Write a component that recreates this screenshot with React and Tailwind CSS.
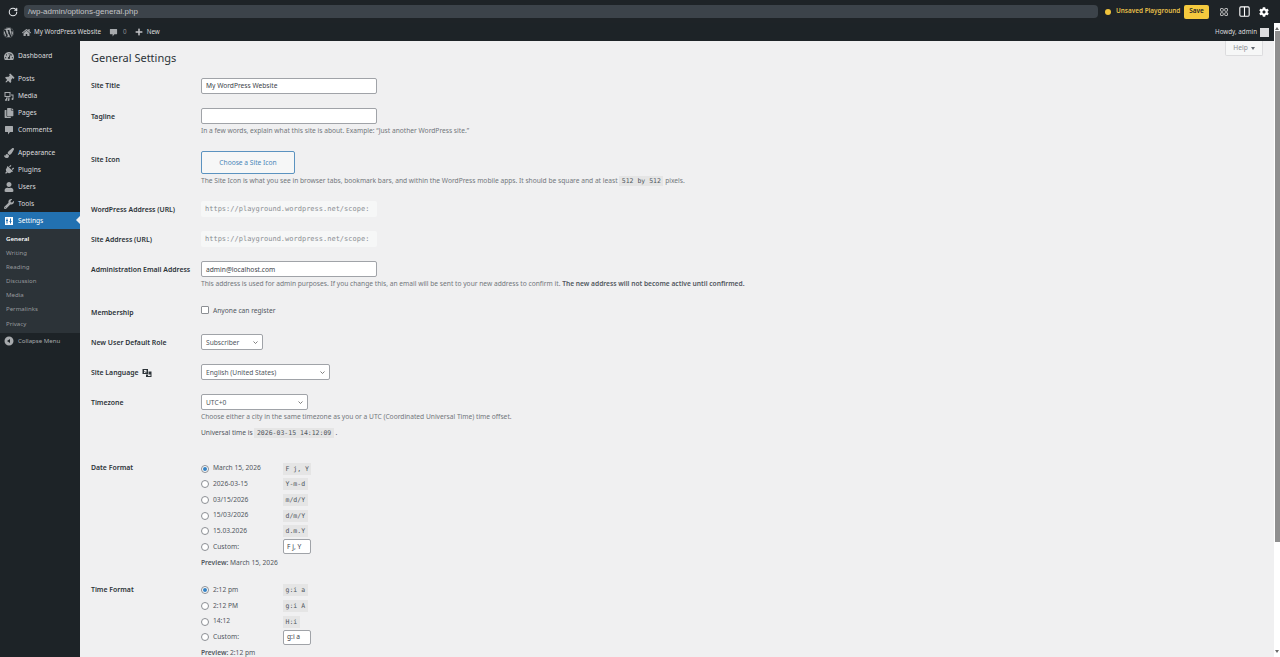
import React from 'react';
import {
  FaWordpress, FaHome, FaPlus, FaTachometerAlt, FaThumbtack, FaCopy,
  FaPaintBrush, FaPlug, FaUser, FaWrench, FaCog,
} from 'react-icons/fa';
import { LuRotateCw } from 'react-icons/lu';

const font = 'font-["Noto_Sans","Open_Sans",sans-serif]';

function BubbleIcon({ className = 'w-[10px] h-[10px]' }) {
  return (
    <svg viewBox="0 0 20 20" className={className} fill="currentColor">
      <path d="M3 2h14a1 1 0 0 1 1 1v10a1 1 0 0 1-1 1h-5l-4 5v-5H3a1 1 0 0 1-1-1V3a1 1 0 0 1 1-1z" />
    </svg>
  );
}

function MediaIcon() {
  return (
    <svg viewBox="0 0 20 20" className="w-[10px] h-[10px]" fill="currentColor">
      <path d="M1 2h12v10H1zm2 2v6h8V4z" fillRule="evenodd" />
      <path d="M14 7h5v9a2 2 0 1 1-2-2V9h-3zM4 13h7v5a2 2 0 1 1-2-2v-1H6v3a2 2 0 1 1-2-2z" />
    </svg>
  );
}

function SettingsIcon() {
  return (
    <svg viewBox="0 0 20 20" className="w-[10px] h-[10px]" fill="currentColor">
      <path d="M2 2h16v16H2zm3 3v3H4v2h1v5h2v-5h1V8H7V5zm7 0v5h-1v2h1v3h2v-3h1v-2h-1V5z" fillRule="evenodd" />
    </svg>
  );
}

function CollapseIcon() {
  return (
    <svg viewBox="0 0 20 20" className="w-[10px] h-[10px]" fill="currentColor">
      <path d="M10 1a9 9 0 1 1 0 18 9 9 0 0 1 0-18zm2 5-6 4 6 4z" fillRule="evenodd" />
    </svg>
  );
}

function TranslationIcon() {
  return (
    <svg viewBox="0 0 20 20" className="w-[10px] h-[10px]" fill="currentColor">
      <path d="M1 2h11v10H1zm3 2v2h3v1H4v3h5V9H6V8h3V4z" fillRule="evenodd" />
      <path d="M13 7h6v11H8v-5h5zm-1 6v3h5v-3z" fillRule="evenodd" />
    </svg>
  );
}

function MenuItem({ icon, label, active }) {
  return (
    <div className={`flex items-center h-[17px] ${active ? 'bg-[#2271b1] text-white relative' : 'text-[#dcdcde]'}`}>
      <span className={`w-[18px] flex justify-center text-[10px] ${active ? 'text-white' : 'text-[#a7aaad]'}`}>{icon}</span>
      <span className="pt-[2px] text-[6.65px] leading-none">{label}</span>
      {active && (
        <span className="absolute right-0 top-[4px] w-0 h-0 border-y-[4px] border-y-transparent border-r-[4px] border-r-[#f0f0f1]" />
      )}
    </div>
  );
}

function SubItem({ label, current }) {
  return (
    <div className={`h-[14.1px] pl-[6px] flex items-center text-[6.1px] leading-none ${current ? 'text-white font-semibold' : 'text-[#c3c4c7b3]'}`}>
      {label}
    </div>
  );
}

function Row({ label, extra, labelPad = 'pt-[11px]', children }) {
  return (
    <div className="flex">
      <div className={`w-[110px] shrink-0 ${labelPad} text-[6.9px] leading-[10px] font-semibold text-[#2c3338] flex items-start gap-[3px]`}>
        {label}
        {extra}
      </div>
      <div className="flex-1 pt-[7.5px] pb-[7px]">{children}</div>
    </div>
  );
}

function Desc({ children }) {
  return <p className="mt-[1px] text-[6.67px] leading-[11.5px] text-[#72777c]">{children}</p>;
}

function Code({ children }) {
  return (
    <code className='bg-[#e5e5e5] px-[2.5px] py-[1px] text-[6.5px] leading-[10px] font-["DejaVu_Sans_Mono",monospace] text-[#50575e]'>
      {children}
    </code>
  );
}

function Input({ value }) {
  return (
    <div className="w-[176px] h-[16px] bg-white border border-[#a0a3a8] rounded-[2px] px-[4px] pt-[2px] flex items-center text-[6.67px] leading-none text-[#3c434a]">
      {value}
    </div>
  );
}

function ReadonlyInput({ value }) {
  return (
    <div className='w-[176px] h-[15.5px] bg-[#f6f7f7] rounded-[2px] px-[4px] pt-[1px] flex items-center whitespace-nowrap text-[7px] leading-none text-[#8a8e93] font-["DejaVu_Sans_Mono",monospace]'>
      {value}
    </div>
  );
}

function Select({ value, w }) {
  return (
    <div className={`${w} h-[15.5px] bg-white border border-[#a0a3a8] rounded-[2px] px-[4px] pt-[2px] flex items-center justify-between text-[6.67px] leading-none text-[#50575e]`}>
      {value}
      <svg viewBox="0 0 10 6" className="w-[5px] h-[3px]" fill="none" stroke="#555" strokeWidth="1.5">
        <path d="M1 1l4 4 4-4" />
      </svg>
    </div>
  );
}

function Radio({ checked }) {
  return (
    <span className="w-[8px] h-[8px] rounded-full border border-[#8c8f94] bg-white flex items-center justify-center shrink-0">
      {checked && <span className="w-[4px] h-[4px] rounded-full bg-[#3582c4]" />}
    </span>
  );
}

function FormatOption({ label, code, checked, custom }) {
  return (
    <div className="flex items-center h-[15.7px]">
      <Radio checked={checked} />
      <span className="ml-[4px] w-[70px] text-[6.67px] leading-none text-[#50575e]">{label}</span>
      {custom ? (
        <div className="w-[28px] h-[15px] bg-white border border-[#a0a3a8] rounded-[2px] px-[3px] flex items-center text-[6.67px] leading-none text-[#3c434a]">
          {custom}
        </div>
      ) : (
        <Code>{code}</Code>
      )}
    </div>
  );
}

function Preview({ value }) {
  return (
    <p className="mt-[2px] text-[6.67px] leading-[11px] text-[#50575e]">
      <b className="font-semibold">Preview:</b> {value}
    </p>
  );
}

export default function App() {
  return (
    <div className={`h-[657px] overflow-hidden flex flex-col bg-[#f0f0f1] ${font}`}>
      {/* Playground toolbar */}
      <div className="h-[23px] shrink-0 bg-[#1e2327] flex items-center">
        <span className="w-[23px] shrink-0 flex justify-center text-[#e5e7eb] text-[10px] ml-[1px]">
          <LuRotateCw strokeWidth={2.5} />
        </span>
        <div className='w-[1074px] shrink-0 h-[13px] rounded-[4px] bg-[#3c434a] text-[#c3c4c7] text-[8px] leading-none pl-[4px] flex items-center font-["Liberation_Sans",sans-serif]'>
          /wp-admin/options-general.php
        </div>
        <span className="ml-[7px] w-[6px] h-[6px] shrink-0 rounded-full bg-[#f0c33c]" />
        <span className="ml-[5px] w-[64px] shrink-0 whitespace-nowrap text-[6.4px] leading-none font-semibold text-[#e8c04a]">Unsaved Playground</span>
        <span className="ml-[4px] w-[25px] shrink-0 h-[14px] rounded-[2px] bg-[#f5c93e] text-[#1d2327] text-[6.5px] font-semibold leading-none flex items-center justify-center">
          Save
        </span>
        <svg viewBox="0 0 16 16" className="ml-[11px] w-[8px] h-[8px] shrink-0" fill="none" stroke="#ddd" strokeWidth="1.6">
          <rect x="1" y="1" width="5.5" height="5.5" rx="1" />
          <rect x="9.5" y="1" width="5.5" height="5.5" rx="1" />
          <rect x="1" y="9.5" width="5.5" height="5.5" rx="1" />
          <rect x="9.5" y="9.5" width="5.5" height="5.5" rx="1" />
        </svg>
        <svg viewBox="0 0 20 20" className="ml-[11px] w-[11px] h-[11px] shrink-0" fill="none" stroke="#fff" strokeWidth="2">
          <rect x="1.5" y="1.5" width="17" height="17" rx="2" />
          <path d="M10 1.5v17" />
        </svg>
        <FaCog className="ml-[9px] text-white text-[10px] shrink-0" />
      </div>

      {/* WP admin bar */}
      <div className="h-[18px] shrink-0 bg-[#1d2327] flex items-center text-[#dcdcde] text-[6.25px] leading-none">
        <FaWordpress className="ml-[3px] text-[#a7aaad] text-[11px]" />
        <FaHome className="ml-[8px] text-[#a7aaad] text-[9px]" />
        <span className="ml-[3px]">My WordPress Website</span>
        <span className="ml-[8px] text-[#a7aaad]"><BubbleIcon className="w-[9px] h-[9px]" /></span>
        <span className="ml-[5px] text-[#8c8f94]">0</span>
        <FaPlus className="ml-[8px] text-[#c3c4c7] text-[8px]" />
        <span className="ml-[4px]">New</span>
        <span className="ml-auto">Howdy, admin</span>
        <span className="ml-[3px] mr-[11px] w-[9px] h-[9px] bg-[#dcdcde]" />
      </div>

      <div className="flex-1 flex min-h-0 relative">
        {/* Sidebar */}
        <aside className="w-[80px] shrink-0 bg-[#1d2327]">
          <div className="pt-[6px]">
            <MenuItem icon={<FaTachometerAlt />} label="Dashboard" />
          </div>
          <div className="pt-[6px]">
            <MenuItem icon={<FaThumbtack className="rotate-45" />} label="Posts" />
            <MenuItem icon={<MediaIcon />} label="Media" />
            <MenuItem icon={<FaCopy />} label="Pages" />
            <MenuItem icon={<BubbleIcon />} label="Comments" />
          </div>
          <div className="pt-[6px]">
            <MenuItem icon={<FaPaintBrush />} label="Appearance" />
            <MenuItem icon={<FaPlug className="rotate-45" />} label="Plugins" />
            <MenuItem icon={<FaUser />} label="Users" />
            <MenuItem icon={<FaWrench />} label="Tools" />
            <MenuItem icon={<SettingsIcon />} label="Settings" active />
          </div>
          <div className="bg-[#2c3338] pt-[3px] pb-[2px]">
            <SubItem label="General" current />
            <SubItem label="Writing" />
            <SubItem label="Reading" />
            <SubItem label="Discussion" />
            <SubItem label="Media" />
            <SubItem label="Permalinks" />
            <SubItem label="Privacy" />
          </div>
          <div className="flex items-center h-[17px] text-[#a7aaad]">
            <span className="w-[18px] flex justify-center"><CollapseIcon /></span>
            <span className="text-[6.1px] leading-none">Collapse Menu</span>
          </div>
        </aside>

        {/* Content */}
        <main className="flex-1 pl-[11px] min-w-0">
          <h1 className="text-[11px] leading-[15px] text-[#2c3338] pt-[9px] h-[29.2px]">General Settings</h1>

          <Row label="Site Title">
            <Input value="My WordPress Website" />
          </Row>
          <Row label="Tagline">
            <Input value="" />
            <Desc>In a few words, explain what this site is about. Example: “Just another WordPress site.”</Desc>
          </Row>
          <Row label="Site Icon">
            <div className="w-[94px] h-[23px] rounded-[2px] border border-[#5b93c0] bg-[#f6f7f7] text-[#4a86b8] text-[6.67px] leading-none pt-[1px] flex items-center justify-center">
              Choose a Site Icon
            </div>
            <Desc>
              The Site Icon is what you see in browser tabs, bookmark bars, and within the WordPress mobile apps. It should be square and at least <Code>512 by 512</Code> pixels.
            </Desc>
          </Row>
          <Row label="WordPress Address (URL)">
            <ReadonlyInput value="https://playground.wordpress.net/scope:" />
          </Row>
          <Row label="Site Address (URL)">
            <ReadonlyInput value="https://playground.wordpress.net/scope:" />
          </Row>
          <Row label="Administration Email Address">
            <Input value="admin@localhost.com" />
            <Desc>
              This address is used for admin purposes. If you change this, an email will be sent to your new address to confirm it. <b className="font-semibold text-[#50575e]">The new address will not become active until confirmed.</b>
            </Desc>
          </Row>
          <Row label="Membership">
            <div className="flex items-start h-[15.5px] pt-[2px]">
              <span className="w-[8px] h-[8px] rounded-[1px] border border-[#8c8f94] bg-white" />
              <span className="ml-[4px] pt-[1px] text-[6.67px] leading-[8px] text-[#50575e]">Anyone can register</span>
            </div>
          </Row>
          <Row label="New User Default Role">
            <Select value="Subscriber" w="w-[62px]" />
          </Row>
          <Row label="Site Language" extra={<span className="text-[#2c3338]"><TranslationIcon /></span>}>
            <Select value="English (United States)" w="w-[129px]" />
          </Row>
          <Row label="Timezone">
            <Select value="UTC+0" w="w-[107px]" />
            <Desc>Choose either a city in the same timezone as you or a UTC (Coordinated Universal Time) time offset.</Desc>
            <p className="mt-[5px] mb-[8px] text-[6.67px] leading-[11px] text-[#50575e]">
              Universal time is <Code>2026-03-15 14:12:09</Code> .
            </p>
          </Row>
          <Row label="Date Format" labelPad="pt-[10px]">
            <FormatOption label="March 15, 2026" code="F j, Y" checked />
            <FormatOption label="2026-03-15" code="Y-m-d" />
            <FormatOption label="03/15/2026" code="m/d/Y" />
            <FormatOption label="15/03/2026" code="d/m/Y" />
            <FormatOption label="15.03.2026" code="d.m.Y" />
            <FormatOption label="Custom:" custom="F j, Y" />
            <Preview value="March 15, 2026" />
          </Row>
          <Row label="Time Format" labelPad="pt-[10px]">
            <FormatOption label="2:12 pm" code="g:i a" checked />
            <FormatOption label="2:12 PM" code="g:i A" />
            <FormatOption label="14:12" code="H:i" />
            <FormatOption label="Custom:" custom="g:i a" />
            <Preview value="2:12 pm" />
          </Row>
        </main>

        {/* Help tab */}
        <div className="absolute right-[17px] top-0 w-[38px] h-[15px] bg-[#f6f7f7] border border-t-0 border-[#dcdcde] rounded-b-[2px] flex items-center justify-center gap-[3px] text-[6.67px] leading-none text-[#8a8e93]">
          Help
          <span className="w-0 h-0 border-x-[2.5px] border-x-transparent border-t-[3px] border-t-[#646970]" />
        </div>

        {/* Scrollbar */}
        <div className="absolute right-0 -top-[18px] bottom-0 w-[6px] bg-white flex flex-col items-center">
          <span className="mt-[4px] w-0 h-0 border-x-[2px] border-x-transparent border-b-[3px] border-b-[#6b6b6b]" />
          <div className="w-[5px] h-[511px] mt-[1px] bg-[#8f8f8f]" />
          <span className="mt-auto mb-[4px] w-0 h-0 border-x-[2px] border-x-transparent border-t-[3px] border-t-[#6b6b6b]" />
        </div>
      </div>
    </div>
  );
}
